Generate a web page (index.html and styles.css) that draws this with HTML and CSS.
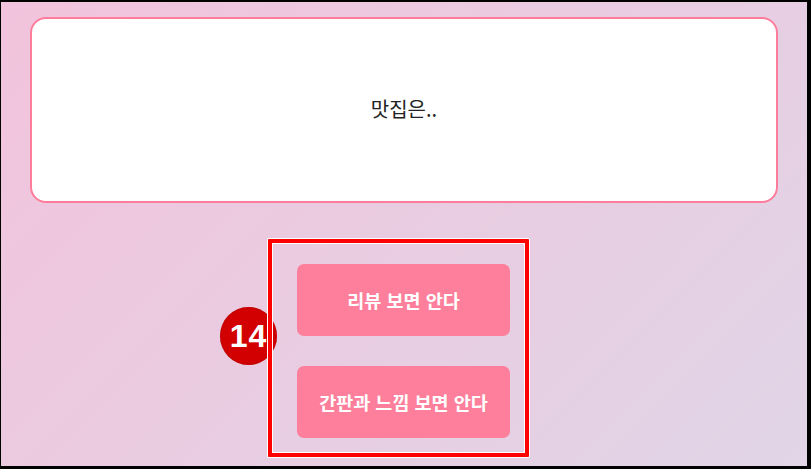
FILE: index.html
```html
<!DOCTYPE html>
<html lang="ko">
<head>
<meta charset="utf-8">
<title>맛집은..</title>
<link rel="stylesheet" href="styles.css">
</head>
<body>
<div class="page">
  <div class="question-card">
    <p class="question">맛집은..</p>
  </div>
  <div class="answers">
    <button class="answer">리뷰 보면 안다</button>
    <button class="answer">간판과 느낌 보면 안다</button>
  </div>
  <div class="badge">14</div>
  <div class="highlight"></div>
</div>
</body>
</html>
```

FILE: styles.css
```css
html, body {
  margin: 0;
  padding: 0;
  width: 811px;
  height: 469px;
  background: #000;
  overflow: hidden;
}

.page {
  position: relative;
  margin: 2px 4px 0 1px;
  width: 806px;
  height: 464px;
  background: linear-gradient(135deg, #f2c3dc 0%, #e9cce1 50%, #e1d5e7 100%);
  display: flex;
  flex-direction: column;
  align-items: center;
  font-family: "Noto Sans CJK KR", "Noto Sans", sans-serif;
}

.question-card {
  box-sizing: border-box;
  margin-top: 15px;
  width: 748px;
  height: 186px;
  background: #fff;
  border: 2px solid #fd7d9b;
  border-radius: 16px;
  display: flex;
  align-items: center;
  justify-content: center;
}

.question {
  margin: 0 0 4px 0;
  font-size: 20px;
  color: #222;
}

.answers {
  margin-top: 61px;
  display: flex;
  flex-direction: column;
  gap: 30px;
  margin-left: -1px;
}

.answer {
  width: 213px;
  height: 72px;
  border: none;
  border-radius: 7px;
  background: #fd7f9b;
  color: #fff;
  font-family: "Noto Sans CJK KR", "Noto Sans", sans-serif;
  font-size: 18.5px;
  font-weight: 700;
  padding: 0;
}

.badge {
  position: absolute;
  left: 219px;
  top: 305px;
  width: 57px;
  height: 58px;
  border-radius: 50%;
  background: #d20000;
  box-shadow: inset 0 0 2px #a00000;
  color: #fff;
  font-family: "Liberation Sans", Arial, sans-serif;
  font-weight: 700;
  font-size: 32px;
  letter-spacing: 1px;
  display: flex;
  align-items: center;
  justify-content: center;
  line-height: 1;
}

.highlight {
  position: absolute;
  left: 267px;
  top: 237px;
  width: 253px;
  height: 210px;
  border: 4px solid #ff0000;
  box-shadow: 0 0 0 1px #fff, inset 0 0 0 1px #fff;
  border-radius: 1px;
}
```
